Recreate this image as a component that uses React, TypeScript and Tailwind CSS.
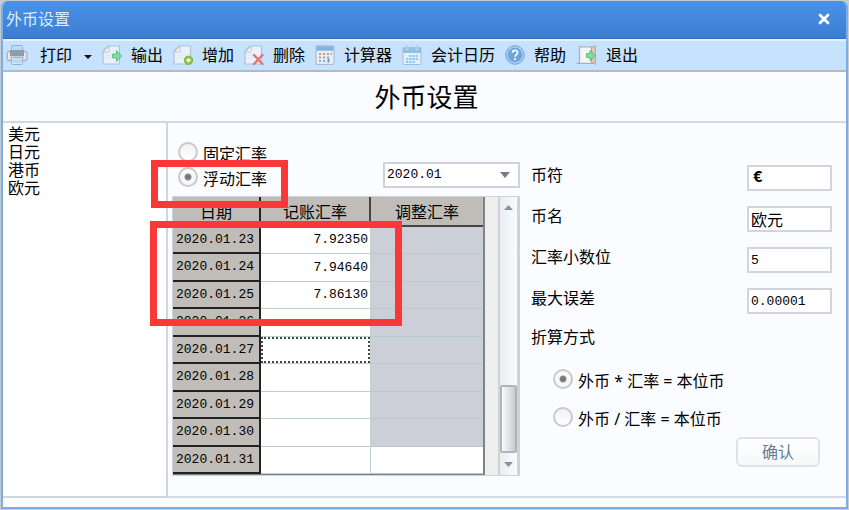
import type { ReactNode } from "react";

function PrinterIcon() {
  return (
    <svg width="22" height="20" viewBox="0 0 22 20" className="shrink-0">
      <rect x="5.5" y="0.5" width="11" height="7" rx="1" fill="#b9dcf3" stroke="#8fb4d2" />
      <rect x="1" y="6" width="20" height="10" rx="2.5" fill="#cdd2d9" stroke="#a1a9b5" />
      <rect x="4" y="5" width="14" height="6" fill="#929ba9" />
      <path d="M3 8v6M19 8v6" stroke="#eef2f6" strokeWidth="1.5" />
      <rect x="5.5" y="12.5" width="11" height="7" rx="1" fill="#cfe8f8" stroke="#8fb4d2" />
      <path d="M7 15h8M7 17h8" stroke="#a9c8e0" />
    </svg>
  );
}

function Page({ children }: { children: ReactNode }) {
  return (
    <svg width="20" height="20" viewBox="0 0 20 20" className="shrink-0">
      <path d="M6 1h11.5v18H1V6z" fill="#e9f2fb" stroke="#b3c0d0" strokeWidth="1.2" />
      <path d="M7 1.5v5.5H1.5z" fill="#fff" stroke="#b3c0d0" />
      <path d="M4 10h9M4 13h6" stroke="#dbe6f1" />
      {children}
    </svg>
  );
}

function ExportIcon() {
  return (
    <Page>
      <path d="M10.5 9h4V5.5l5 5.5-5 5.5V13h-4z" fill="#7fdc9a" stroke="#4fb877" strokeWidth="0.8" />
    </Page>
  );
}

function AddIcon() {
  return (
    <Page>
      <circle cx="15.5" cy="15.3" r="4.2" fill="#8ec63f" stroke="#74a834" strokeWidth="0.8" />
      <path d="M15.5 13v4.6M13.2 15.3h4.6" stroke="#fff" strokeWidth="1.5" />
    </Page>
  );
}

function DeleteIcon() {
  return (
    <Page>
      <path d="M10 10l8.5 9M18.5 10L10 19" stroke="#e2736d" strokeWidth="2.4" strokeLinecap="round" />
    </Page>
  );
}

function CalculatorIcon() {
  return (
    <svg width="20" height="20" viewBox="0 0 20 20" className="shrink-0">
      <rect x="1" y="0.8" width="18" height="18.6" rx="1" fill="#e9eef4" stroke="#a9b4c1" />
      <rect x="1.5" y="1.3" width="17" height="4.4" fill="#7db4e4" />
      <path d="M4 9h2M8 9h2" stroke="#dc9577" strokeWidth="2" />
      <path d="M12 9h2M4 12.5h2M8 12.5h2M12 12.5h2M4 16h2M8 16h2" stroke="#9ba7b6" strokeWidth="2" />
      <path d="M15.5 9h1.5" stroke="#dc9577" strokeWidth="2" />
      <path d="M13.5 13.5v4" stroke="#5a9be0" strokeWidth="2" />
    </svg>
  );
}

function CalendarIcon() {
  return (
    <svg width="20" height="20" viewBox="0 0 20 20" className="shrink-0">
      <rect x="1" y="2.5" width="18" height="17" rx="1" fill="#e3f0fa" stroke="#a3bfd8" />
      <rect x="1" y="2.5" width="18" height="5.5" fill="#92bfe6" />
      <path d="M5 0.5v4.5M15 0.5v4.5" stroke="#dcebf7" strokeWidth="2.4" />
      <path d="M5 0.5v4M15 0.5v4" stroke="#8aa9c4" />
      <path d="M7 11h9M4 14h12M4 17h9" stroke="#8fcbe9" strokeWidth="2.2" strokeDasharray="2.4 0.8" />
    </svg>
  );
}

function HelpIcon() {
  return (
    <svg width="20" height="20" viewBox="0 0 20 20" className="shrink-0">
      <circle cx="10" cy="10" r="9.3" fill="#a7cdee" stroke="#76a5d3" />
      <circle cx="10" cy="10" r="7.2" fill="#6ba5dc" />
      <path d="M7.4 7.9c.2-3.5 5.4-3.2 5.2-.2-.1 1.8-2.5 1.9-2.5 4.1" fill="none" stroke="#fff" strokeWidth="1.7" />
      <circle cx="10" cy="14.2" r="1.1" fill="#fff" />
    </svg>
  );
}

function ExitIcon() {
  return (
    <svg width="21" height="20" viewBox="0 0 21 20" className="shrink-0">
      <path d="M3.5 18V1.8h12V18" fill="#f4f6f8" stroke="#aeb1b5" strokeWidth="1.3" />
      <path d="M0.5 18.3h18" stroke="#b3aba6" strokeWidth="1.3" />
      <path d="M15.5 2.5L19.5 0.5v19l-4-2z" fill="#dcc8b8" stroke="#b79e8b" strokeWidth="0.8" />
      <path d="M10.5 8.5H14v-3l5.5 5-5.5 5v-3h-3.5z" fill="#86dc97" stroke="#4fb36c" strokeWidth="0.8" />
    </svg>
  );
}

const tools = [
  { label: "输出", icon: <ExportIcon /> },
  { label: "增加", icon: <AddIcon /> },
  { label: "删除", icon: <DeleteIcon /> },
  { label: "计算器", icon: <CalculatorIcon /> },
  { label: "会计日历", icon: <CalendarIcon /> },
  { label: "帮助", icon: <HelpIcon /> },
  { label: "退出", icon: <ExitIcon /> },
];

const currencies = ["美元", "日元", "港币", "欧元"];

const rates = [
  { date: "2020.01.23", rate: "7.92350" },
  { date: "2020.01.24", rate: "7.94640" },
  { date: "2020.01.25", rate: "7.86130" },
  { date: "2020.01.26", rate: "" },
  { date: "2020.01.27", rate: "", editing: true },
  { date: "2020.01.28", rate: "" },
  { date: "2020.01.29", rate: "" },
  { date: "2020.01.30", rate: "" },
  { date: "2020.01.31", rate: "", open: true },
];

const fields = [
  { id: "symbol", label: "币符", value: "€", style: "pl-1 text-base font-bold" },
  { id: "name", label: "币名", value: "欧元", style: "pl-[2px] text-base" },
  { id: "digits", label: "汇率小数位", value: "5", style: "pl-[2px] text-[13px]" },
  { id: "error", label: "最大误差", value: "0.00001", style: "pl-[2px] text-[13px]" },
];

const mono = "font-['Liberation_Mono','Noto_Sans_CJK_SC',monospace]";

function Radio({ name, label, checked }: { name: string; label: string; checked?: boolean }) {
  return (
    <label className="flex h-5 items-start gap-[5px] leading-6 whitespace-nowrap">
      <input
        type="radio"
        name={name}
        defaultChecked={checked}
        className="size-5 shrink-0 appearance-none rounded-full border-2 border-[#c9c9c9] bg-[linear-gradient(#f2f2f2,#ffffff)] checked:bg-[radial-gradient(circle,#666_0,#8a8a8a_3px,#f8f8f8_4px)]"
      />
      {label}
    </label>
  );
}

function RateTable() {
  return (
    <div className="flex border border-[#cdd2dc] bg-[#eeeeee]">
      <table className="w-[312px] table-fixed border-separate border-spacing-0 border-r-2 border-b border-[#7d8583]">
        <thead>
          <tr className="h-[30px] bg-[#c0bdb8]">
            <th className="w-[88px] border-r-2 border-b-2 border-[#222] p-0 pt-[2px] font-normal">日期</th>
            <th className="w-[110px] border-r-2 border-b-2 border-[#444] p-0 pt-[2px] font-normal">记账汇率</th>
            <th className="border-b-2 border-[#444] p-0 pt-[2px] font-normal">调整汇率</th>
          </tr>
        </thead>
        <tbody className={`${mono} text-[13px] leading-5`}>
          {rates.map((r) => (
            <tr key={r.date} className="h-[27px] even:h-7">
              <th className="border-r-2 border-b-2 border-[#222] bg-[#c0bdb8] p-0 pl-[3px] text-left font-normal">
                {r.date}
              </th>
              <td className="border-r border-b border-[#bcd3cb] bg-white p-0 text-right">
                {r.editing ? (
                  <input
                    aria-label={`${r.date} 记账汇率`}
                    className="block h-[26px] w-full border-2 border-dotted border-[#444] px-1 text-right outline-none"
                  />
                ) : (
                  <span className="pr-[2px]">{r.rate}</span>
                )}
              </td>
              <td className={`border-b border-[#b5ccc6] p-0 ${r.open ? "bg-white" : "bg-[#cccfd8]"}`} />
            </tr>
          ))}
        </tbody>
      </table>

      {/* scroll bar */}
      <div className="ml-auto flex w-[21px] flex-col border-x-2 border-[#d0d2d6] bg-[linear-gradient(90deg,#e8edf1,#fafcfe)]">
        <button aria-label="向上" className="flex h-5 items-center justify-center">
          <svg width="9" height="5" viewBox="0 0 9 5">
            <path d="M0 5L4.5 0 9 5z" fill="#8492a8" />
          </svg>
        </button>
        <div className="mt-auto h-[68px] rounded-xs border-2 border-[#b4b4b8] bg-[linear-gradient(90deg,#fbfbfc,#c9cad2)]" />
        <button aria-label="向下" className="flex h-[22px] items-center justify-center">
          <svg width="9" height="5" viewBox="0 0 9 5">
            <path d="M0 0h9L4.5 5z" fill="#8492a8" />
          </svg>
        </button>
      </div>
    </div>
  );
}

export default function App() {
  return (
    <div className="flex min-h-screen flex-col bg-[#c3ccd2] p-px font-['Noto_Sans','Noto_Sans_CJK_SC',sans-serif] text-base leading-5 text-black">
      <div className="flex flex-1 flex-col overflow-hidden rounded-t-md border-x-2 border-b-2 border-[#7aaeea] bg-[#fbfcff]">

        {/* title bar */}
        <header className="flex h-[38px] items-center justify-between border-b border-[#326fc4] bg-linear-to-b from-[#4a93e8] to-[#3c7dd2] pr-4 pb-px pl-[3px] text-[#dcebff]">
          <span>外币设置</span>
          <button aria-label="关闭">
            <svg width="12" height="12" viewBox="0 0 12 12">
              <path d="M2 2l8 8M10 2l-8 8" stroke="#fff" strokeWidth="2.8" strokeLinecap="round" />
            </svg>
          </button>
        </header>

        {/* toolbar */}
        <nav className="flex h-[33px] items-center gap-[10px] border-t-2 border-b-2 border-t-[#e4f1ff] border-b-[#b4babf] bg-[#c6e2ff] pb-px pl-[3px] whitespace-nowrap">
          <button className="flex items-center gap-3">
            <PrinterIcon />
            打印
            <svg width="8" height="4" viewBox="0 0 8 4" className="mt-1">
              <path d="M0 0h8L4 4z" fill="#111" />
            </svg>
          </button>
          {tools.map((t) => (
            <button key={t.label} className="flex items-center gap-[9px]">
              {t.icon}
              {t.label}
            </button>
          ))}
        </nav>

        <h1 className="border-b-2 border-[#cfd9e6] pt-[9px] pb-2 pl-1 text-center text-[26px] leading-8">外币设置</h1>

        <main className="relative mb-[9px] flex flex-1">
          {/* currency list */}
          <ul className="w-[165px] shrink-0 border-r-2 border-b-2 border-[#d0d5de] bg-white pt-[3px] pl-[5px] font-['Liberation_Sans','Noto_Sans_CJK_SC',sans-serif] leading-[18px]">
            {currencies.map((c) => (
              <li key={c}>{c}</li>
            ))}
          </ul>

          <div className="flex flex-1 border-b-2 border-[#cfdcea] pb-5 pl-1">
            <section className="w-[348px] shrink-0 pt-[19px]">
              <div className="mb-2 flex items-end justify-between">
                <div className="ml-[6px] flex flex-col gap-[5px] pb-px">
                  <Radio name="mode" label="固定汇率" />
                  <Radio name="mode" label="浮动汇率" checked />
                </div>
                <div className="relative">
                  <select
                    aria-label="期间"
                    className={`${mono} block h-[26px] w-[137px] appearance-none border-2 border-[#cfd2da] bg-white pl-[2px] text-[13px]`}
                  >
                    <option>2020.01</option>
                  </select>
                  <svg width="10" height="6" viewBox="0 0 10 6" className="pointer-events-none absolute top-[10px] right-[10px]">
                    <path d="M0 0h10L5 6z" fill="#7c7c80" />
                  </svg>
                </div>
              </div>
              <RateTable />
            </section>

            <section className="flex flex-1 flex-col pt-[42px] pr-[14px] pl-[11px]">
              <div className="flex flex-col gap-[15px]">
                {fields.map((f) => (
                  <div key={f.id} className="flex items-start justify-between">
                    <label htmlFor={f.id}>{f.label}</label>
                    <input
                      id={f.id}
                      defaultValue={f.value}
                      className={`${mono} ${f.style} h-[26px] w-[85px] border-2 border-[#d3d5de] bg-white`}
                    />
                  </div>
                ))}
              </div>

              <fieldset className="mt-[13px]">
                <legend>折算方式</legend>
                <div className="mt-[22px] ml-[22px] flex flex-col gap-[18px]">
                  <Radio name="convert" label="外币 * 汇率 = 本位币" checked />
                  <Radio name="convert" label="外币 / 汇率 = 本位币" />
                </div>
              </fieldset>

              <button className="mt-[10px] mr-3 h-[30px] w-[84px] self-end rounded-md border-2 border-[#dfe2e4] bg-linear-to-b from-white to-[#f6f7f8] text-[#5f7d96]">
                确认
              </button>
            </section>
          </div>

          {/* highlight frames */}
          <div className="pointer-events-none absolute top-[37px] left-[148px] h-12 w-[137px] border-7 border-[#fb3838]" />
          <div className="pointer-events-none absolute top-[98px] left-[147px] h-[105px] w-[252px] border-7 border-[#fb3838]" />
        </main>
      </div>
    </div>
  );
}
